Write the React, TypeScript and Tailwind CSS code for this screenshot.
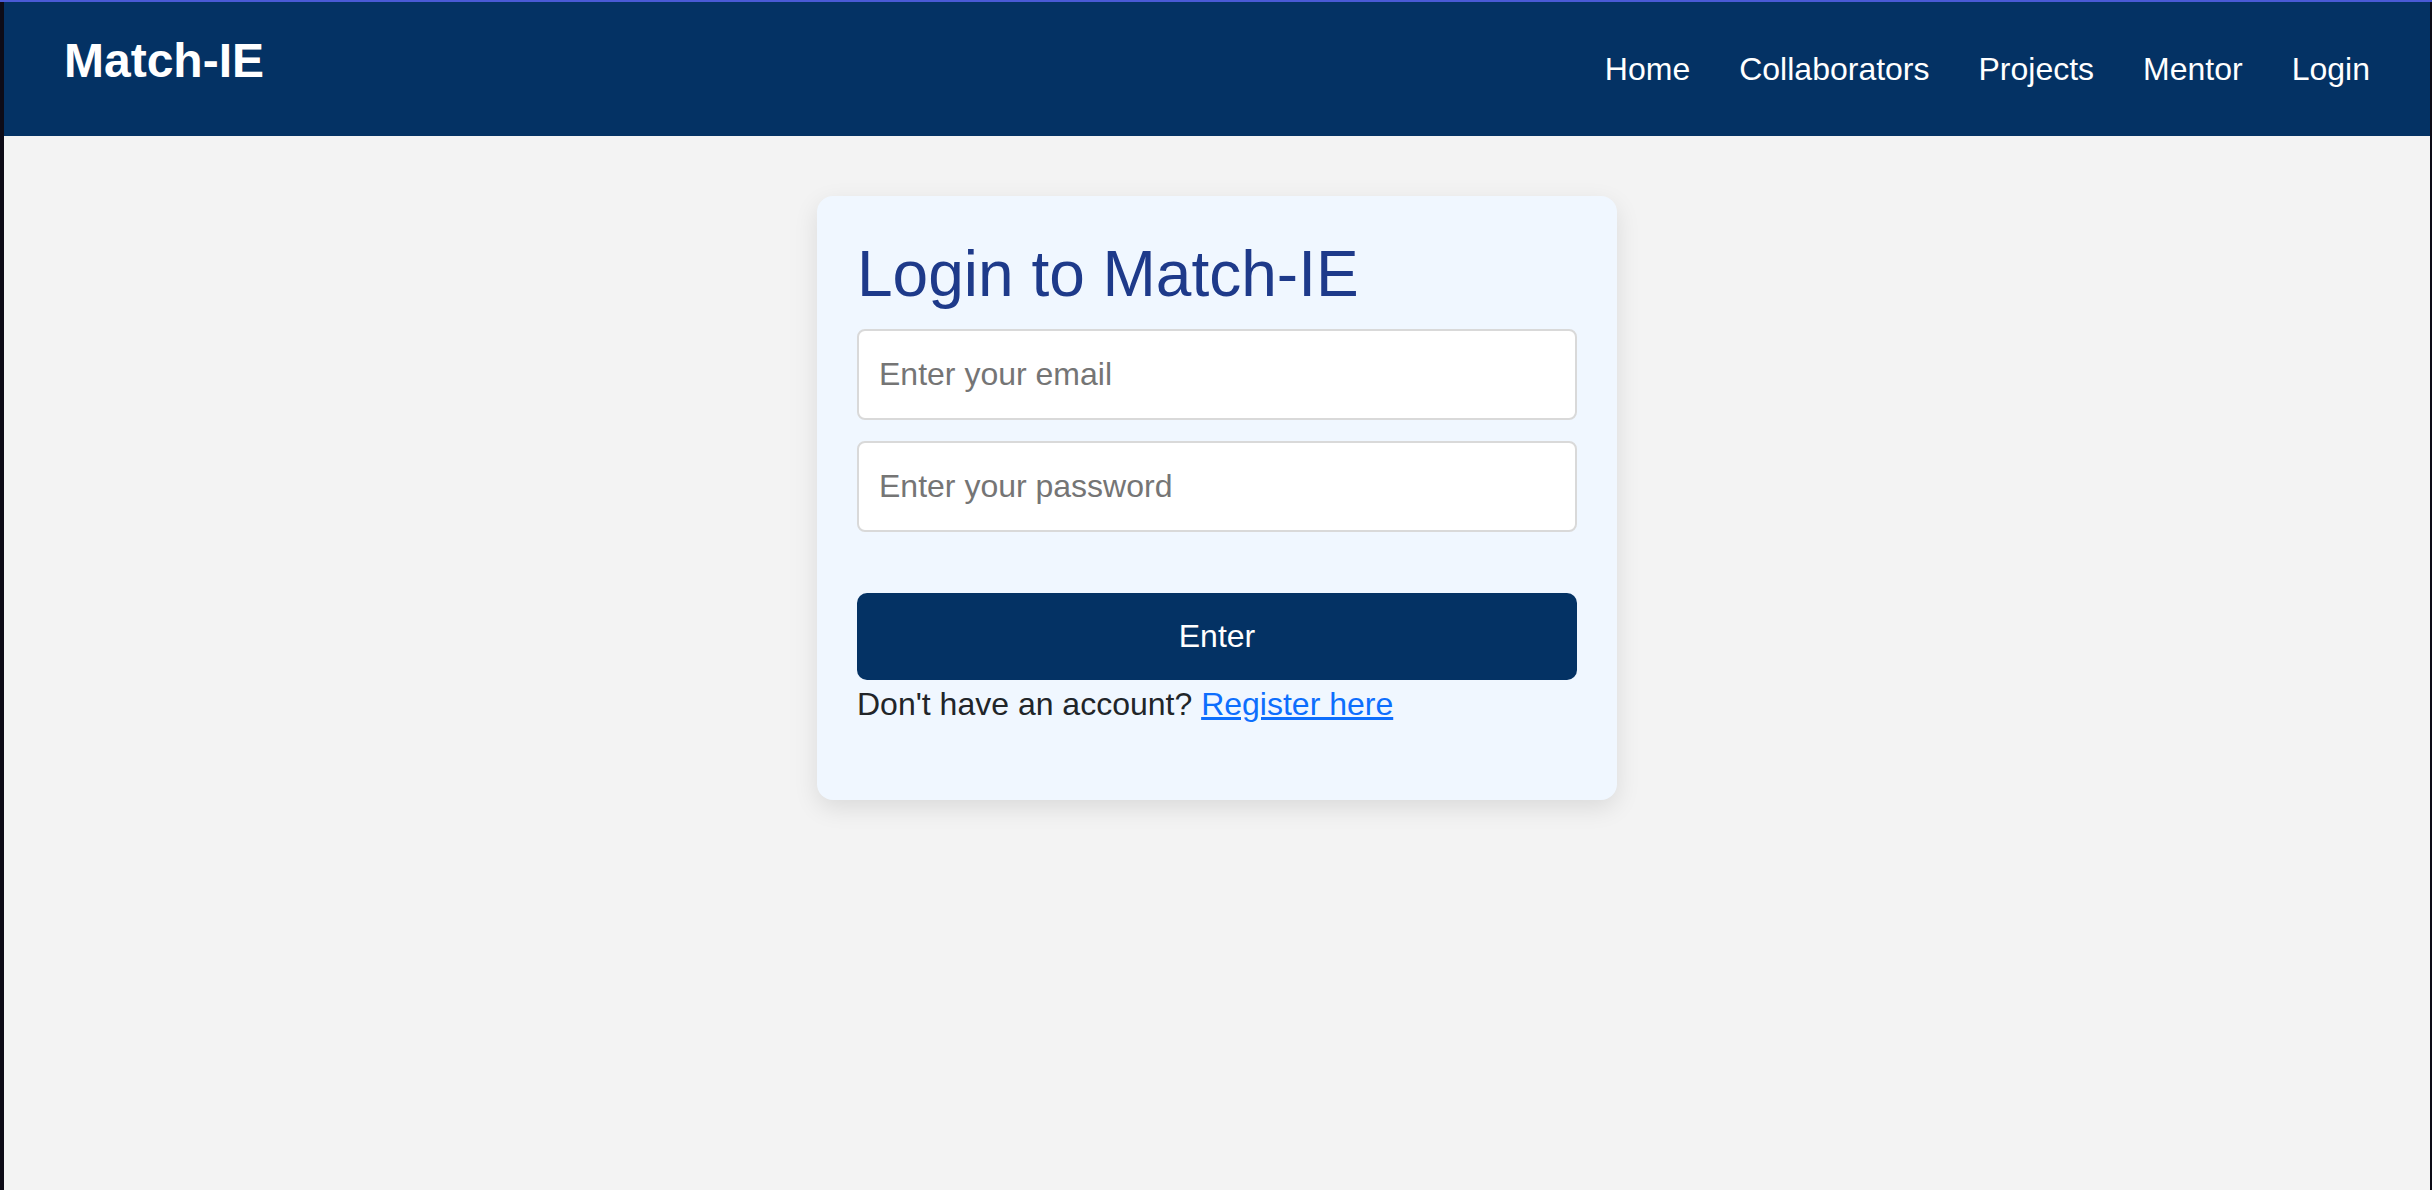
import React from "react";

export default function App() {
  const font = { fontFamily: '"Liberation Sans", Arial, sans-serif' };
  return (
    <div className="w-full h-[1190px] flex flex-col bg-[#0d0b17]" style={font}>
      <div className="h-[2px] w-full bg-[#4a5ad6] shrink-0" />
      <div className="flex flex-1 min-h-0">
        <div className="w-[4px] bg-[#0d0b17] shrink-0" />
        <div className="flex-1 flex flex-col bg-[#f3f3f3]">
          <header className="h-[134px] bg-[#043264] flex items-center justify-between pl-[60px] pr-[60px] shrink-0">
            <h1 className="text-[48px] font-bold text-white leading-[57.6px] mb-[16px]">Match-IE</h1>
            <nav className="flex items-center gap-[49px] text-[32px] text-white leading-[36.8px]">
              <a>Home</a>
              <a>Collaborators</a>
              <a>Projects</a>
              <a>Mentor</a>
              <a>Login</a>
            </nav>
          </header>
          <div className="flex justify-center">
            <div className="mt-[60px] w-[800px] bg-[#f0f7ff] rounded-[16px] p-[40px] shadow-[0_8px_24px_rgba(0,0,0,0.1)]">
              <h2 className="text-[64px] text-[#1e3a8a] leading-[76.8px] mb-[16px]">Login to Match-IE</h2>
              <input
                className="block w-full h-[91px] mb-[21px] bg-white border-2 border-[#d9d9d9] rounded-[8px] px-[20px] text-[32px] placeholder:text-[#757575] outline-none"
                placeholder="Enter your email"
              />
              <input
                type="password"
                className="block w-full h-[91px] bg-white border-2 border-[#d9d9d9] rounded-[8px] px-[20px] text-[32px] placeholder:text-[#757575] outline-none"
                placeholder="Enter your password"
              />
              <button className="block w-full h-[87px] mt-[61px] bg-[#043264] rounded-[10px] text-white text-[32px]">
                Enter
              </button>
              <p className="text-[32px] leading-[48px] text-[#212529] mb-[32px]">
                Don't have an account?{" "}
                <a className="text-[#0d6efd] underline">Register here</a>
              </p>
            </div>
          </div>
        </div>
        <div className="w-[2px] bg-[#0d0b17] shrink-0" />
      </div>
    </div>
  );
}
